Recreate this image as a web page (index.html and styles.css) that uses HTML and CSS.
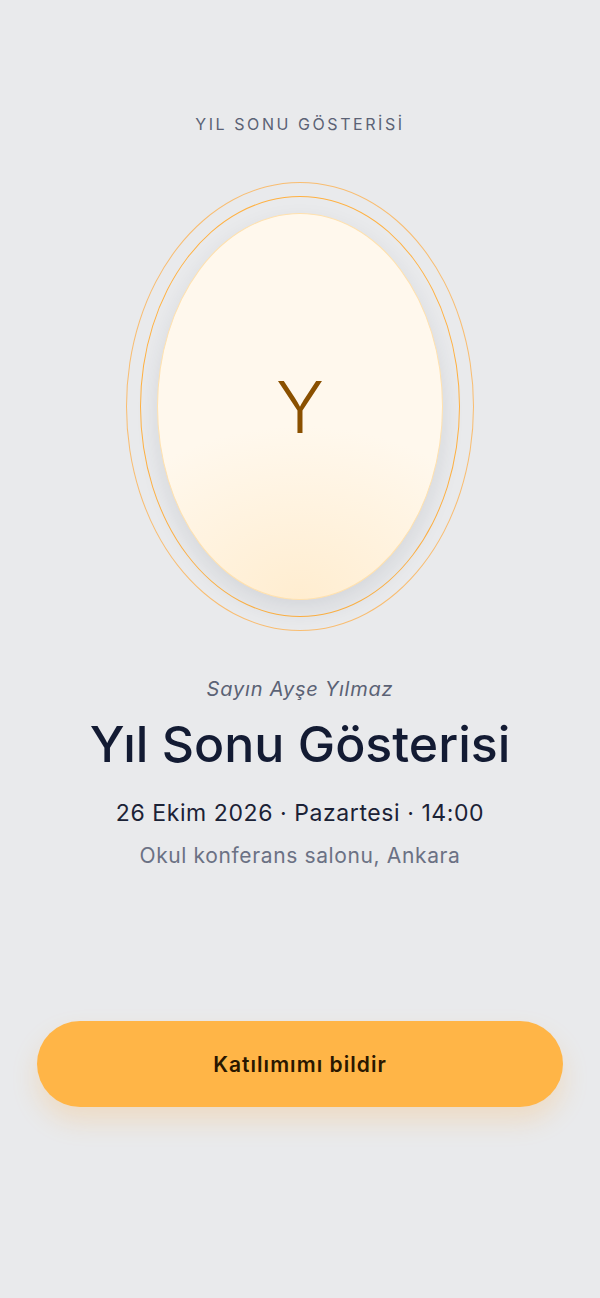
FILE: index.html
```html
<!DOCTYPE html>
<html lang="tr">
<head>
    <meta charset="UTF-8">
    <meta name="viewport" content="width=device-width, initial-scale=1.0">
    <title>Yıl Sonu Gösterisi</title>
    <link rel="stylesheet" href="styles.css">
</head>
<body>
    <div class="invite">
        <p class="eyebrow">YIL SONU GÖSTERİSİ</p>

        <!-- Monogram with the two thin rings -->
        <div class="ring-outer">
            <div class="ring-inner">
                <div class="medallion">
                    <span class="initial">Y</span>
                </div>
            </div>
        </div>

        <p class="guest">Sayın Ayşe Yılmaz</p>
        <h1 class="title">Yıl Sonu Gösterisi</h1>
        <p class="when">26 Ekim 2026 · Pazartesi · 14:00</p>
        <p class="where">Okul konferans salonu, Ankara</p>

        <button class="rsvp">Katılımımı bildir</button>
    </div>
</body>
</html>
```

FILE: styles.css
```css
body {
    margin: 0;
    background-color: #e9eaec;
    font-family: Inter, "Noto Sans", sans-serif;
    color: #131b33;
}
.invite {
    display: flex;
    flex-direction: column;
    align-items: center;
    padding-top: 114px;
    min-height: 1298px;
    box-sizing: border-box;
}
.eyebrow {
    margin: 0 0 48px;
    font-size: 16px;
    line-height: 20px;
    letter-spacing: 0.16em;
    color: #5b6275;
}
.ring-outer {
    padding: 13px;
    border: 1px solid rgba(255, 170, 60, 0.7);
    border-radius: 50%;
}
.ring-inner {
    padding: 16px;
    border: 1px solid #ffb142;
    border-radius: 50%;
}
.medallion {
    width: 284px;
    height: 385px;
    border: 1px solid #ffe1ae;
    border-radius: 50%;
    background: radial-gradient(ellipse 80% 45% at 50% 100%, #ffedd0 0%, rgba(255, 246, 232, 0) 100%), #fff8ed;
    box-shadow: 0 10px 22px rgba(40, 50, 70, 0.10);
    display: flex;
    align-items: center;
    justify-content: center;
}
.initial {
    font-size: 72px;
    font-weight: 300;
    color: #8a5000;
    line-height: 1;
}
.guest {
    margin: 44px 0 0;
    font-size: 20px;
    line-height: 28px;
    font-style: italic;
    letter-spacing: 0.04em;
    color: #5b6275;
}
.title {
    margin: 11px 0 0;
    font-size: 50px;
    line-height: 60px;
    font-weight: 500;
    color: #131b33;
}
.when {
    margin: 24px 0 0;
    font-size: 23px;
    line-height: 30px;
    letter-spacing: 0.025em;
    color: #1b2236;
}
.where {
    margin: 14px 0 0;
    font-size: 21px;
    line-height: 28px;
    letter-spacing: 0.03em;
    color: #6b7184;
}
.rsvp {
    margin-top: 151px;
    width: 526px;
    height: 86px;
    border: none;
    border-radius: 43px;
    background-color: #ffb547;
    box-shadow: 0 14px 26px rgba(255, 170, 60, 0.22);
    font-family: inherit;
    font-size: 21px;
    font-weight: 600;
    letter-spacing: 0.05em;
    color: #2a1700;
    cursor: pointer;
}
```
